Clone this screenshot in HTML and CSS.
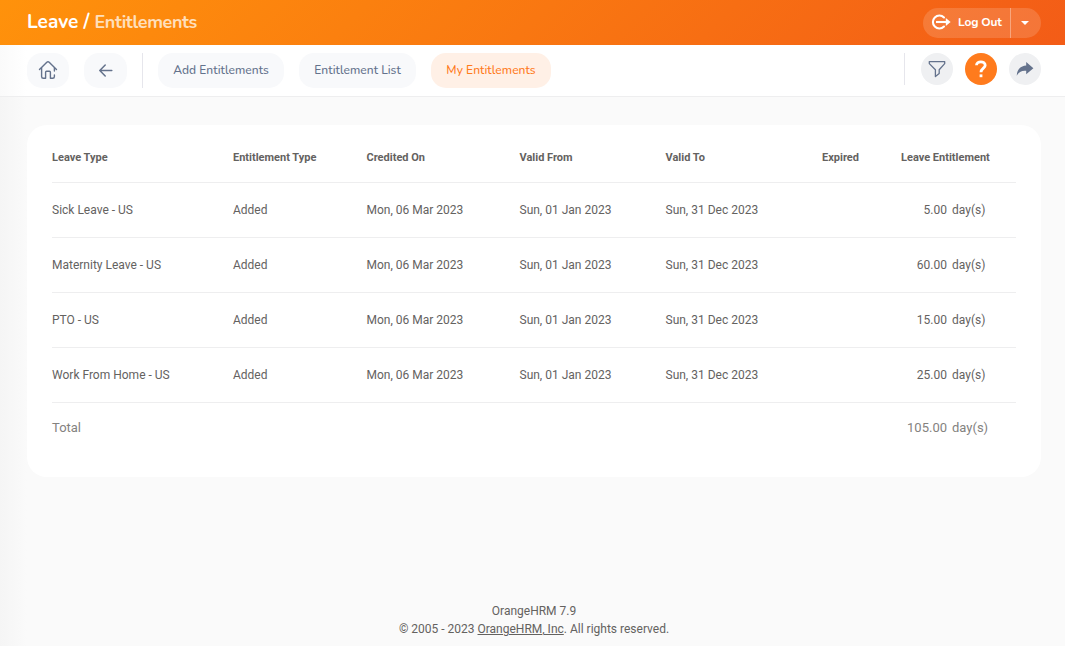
FILE: index.html
```
<!DOCTYPE html>
<html lang="en">

<head>
    <meta charset="UTF-8">
    <meta name="viewport" content="width=device-width, initial-scale=1.0">
    <title>Leave / Entitlements</title>
    <link rel="stylesheet" href="styles.css">
</head>

<body>
    <header class="topbar">
        <h1 class="title"><span class="module">Leave /</span> <span class="page">Entitlements</span></h1>
        <div class="logout">
            <button class="logout-btn">
                <svg width="20" height="16" viewBox="0 0 20 16" fill="none" stroke="#fff" stroke-width="2.1">
                    <path d="M13 3.4A6.5 6.5 0 1 0 13 12.6" stroke-linecap="round" />
                    <path d="M5 8H16" />
                    <path d="M14.8 4L19.6 8L14.8 12Z" fill="#fff" stroke="none" />
                </svg>
                <span>Log Out</span>
            </button>
            <button class="logout-more" aria-label="More">
                <svg width="8" height="4" viewBox="0 0 8 4"><path d="M0 0H8L4 4Z" fill="#fff" /></svg>
            </button>
        </div>
    </header>

    <nav class="toolbar">
        <a class="tab icon home" aria-label="Home">
            <svg width="20" height="20" viewBox="0 0 20 20" fill="none" stroke="#64728c" stroke-width="1.4" stroke-linecap="round" stroke-linejoin="round">
                <path d="M1.5 9.6L8.8 2.2Q10 1.1 11.2 2.2L18.5 9.6" />
                <path d="M3.6 8V16.5Q3.6 18.3 5.3 18.3H7.6V12.2Q7.6 11.3 8.5 11.3H11.5Q12.4 11.3 12.4 12.2V18.3H14.7Q16.4 18.3 16.4 16.5V15M16.4 8V11" />
            </svg>
        </a>
        <a class="tab icon back" aria-label="Back">
            <svg width="14" height="14" viewBox="0 0 14 14" fill="none" stroke="#64728c" stroke-width="1.5" stroke-linecap="round" stroke-linejoin="round">
                <path d="M12.8 7.5H1M6.2 2L0.8 7.5L6.2 13" />
            </svg>
        </a>
        <span class="divider"></span>
        <a class="tab add">Add Entitlements</a>
        <a class="tab list">Entitlement List</a>
        <a class="tab mine active">My Entitlements</a>

        <div class="actions">
            <button class="round" aria-label="Filter">
                <svg width="18" height="18" viewBox="0 0 18 18" fill="none" stroke="#64728c" stroke-width="1.3" stroke-linejoin="round">
                    <path d="M1.3 1.6H16.7V3.6L11.2 9.8V13.6L7.4 16.6V9.8L1.3 3.6Z" />
                </svg>
            </button>
            <button class="round help" aria-label="Help">
                <svg width="14" height="18" viewBox="0 0 14 18" fill="none" stroke="#fff" stroke-width="2.8">
                    <path d="M2.5 5.3C2.5 0.7 11.2 0.6 11.2 5.3C11.2 8.1 7 8.2 7 12.3" />
                    <path d="M7 14.4V17.2" />
                </svg>
            </button>
            <button class="round" aria-label="Share">
                <svg width="18" height="14" viewBox="0 0 18 14" fill="#64728c">
                    <path d="M10.2 0L17.4 6.2L10.2 12.2V8.8C5.6 8.5 2.8 9.8 0.7 13.7C0.9 7.7 4.5 3.7 10.2 3.4Z" />
                </svg>
            </button>
        </div>
    </nav>

    <main class="content">
        <section class="card">
            <table class="entitlements">
                <colgroup>
                    <col class="c-type">
                    <col class="c-kind">
                    <col class="c-credited">
                    <col class="c-from">
                    <col class="c-to">
                    <col class="c-expired">
                    <col class="c-days">
                </colgroup>
                <thead>
                    <tr>
                        <th>Leave Type</th>
                        <th>Entitlement Type</th>
                        <th>Credited On</th>
                        <th>Valid From</th>
                        <th>Valid To</th>
                        <th>Expired</th>
                        <th>Leave Entitlement</th>
                    </tr>
                </thead>
                <tbody>
                    <tr>
                        <td>Sick Leave - US</td>
                        <td>Added</td>
                        <td>Mon, 06 Mar 2023</td>
                        <td>Sun, 01 Jan 2023</td>
                        <td>Sun, 31 Dec 2023</td>
                        <td></td>
                        <td><span class="num">5.00</span><span class="unit">day(s)</span></td>
                    </tr>
                    <tr>
                        <td>Maternity Leave - US</td>
                        <td>Added</td>
                        <td>Mon, 06 Mar 2023</td>
                        <td>Sun, 01 Jan 2023</td>
                        <td>Sun, 31 Dec 2023</td>
                        <td></td>
                        <td><span class="num">60.00</span><span class="unit">day(s)</span></td>
                    </tr>
                    <tr>
                        <td>PTO - US</td>
                        <td>Added</td>
                        <td>Mon, 06 Mar 2023</td>
                        <td>Sun, 01 Jan 2023</td>
                        <td>Sun, 31 Dec 2023</td>
                        <td></td>
                        <td><span class="num">15.00</span><span class="unit">day(s)</span></td>
                    </tr>
                    <tr>
                        <td>Work From Home - US</td>
                        <td>Added</td>
                        <td>Mon, 06 Mar 2023</td>
                        <td>Sun, 01 Jan 2023</td>
                        <td>Sun, 31 Dec 2023</td>
                        <td></td>
                        <td><span class="num">25.00</span><span class="unit">day(s)</span></td>
                    </tr>
                </tbody>
                <tfoot>
                    <tr>
                        <td colspan="6">Total</td>
                        <td><span class="num">105.00</span><span class="unit">day(s)</span></td>
                    </tr>
                </tfoot>
            </table>
        </section>

        <footer class="footer">
            <p>OrangeHRM 7.9</p>
            <p>© 2005 - 2023 <a>OrangeHRM, Inc</a>. All rights reserved.</p>
        </footer>
    </main>
</body>

</html>
```
FILE: styles.css
```
* {
    margin: 0;
    padding: 0;
    box-sizing: border-box;
}

body {
    height: 100vh;
    display: flex;
    flex-direction: column;
    overflow: hidden;
    background-color: #fafafa;
    color: #64625f;
    font-family: Roboto, sans-serif;
    font-size: 12px;
}

button {
    border: none;
    background: none;
    color: inherit;
    cursor: pointer;
}

svg {
    display: block;
    flex: none;
}

/* top bar */
.topbar {
    height: 45px;
    padding: 0 24px 0 27px;
    display: flex;
    align-items: center;
    justify-content: space-between;
    background: linear-gradient(135deg, #ff920b, #f35c17);
    color: #fff;
    font-family: Nunito, "Open Sans", sans-serif;
}

.title {
    padding-bottom: 2px;
    display: flex;
    align-items: baseline;
    gap: 5px;
    font-size: 18px;
    line-height: 24px;
    white-space: nowrap;
}

.module {
    font-size: 19px;
    font-weight: 700;
}

.page {
    font-weight: 700;
    letter-spacing: -0.4px;
    color: #ffdfbb;
}

.logout {
    width: 118px;
    height: 30px;
    display: flex;
    border-radius: 15px;
    background-color: rgba(255, 255, 255, 0.15);
}

.logout-btn {
    width: 88px;
    padding: 0 0 1px 8px;
    display: flex;
    align-items: center;
    gap: 7px;
    border-right: 1px solid rgba(255, 255, 255, 0.35);
    font-family: inherit;
    font-size: 12px;
    font-weight: 700;
    letter-spacing: -0.2px;
    white-space: nowrap;
}

.logout-more {
    flex: 1;
    padding-right: 2px;
    display: flex;
    align-items: center;
    justify-content: center;
}

/* toolbar */
.toolbar {
    height: 52px;
    padding: 8px 24px 0 27px;
    display: flex;
    align-items: flex-start;
    border-bottom: 1px solid #eeeeef;
    background: linear-gradient(90deg, #fafafa, #fff 27px);
    font-family: Nunito, "Open Sans", sans-serif;
}

.tab {
    height: 35px;
    margin-right: 15px;
    padding-bottom: 1px;
    display: flex;
    align-items: center;
    justify-content: center;
    border-radius: 15px;
    background-color: #f8f9fb;
    color: #64728c;
    font-size: 12px;
    font-weight: 500;
    letter-spacing: 0.03px;
    white-space: nowrap;
}

.tab.active {
    background-color: #fff0e6;
    color: #ff7b1d;
}

.home {
    width: 42px;
}

.back {
    width: 43px;
}

.add {
    width: 126px;
}

.list {
    width: 117px;
}

.mine {
    width: 120px;
}

.divider {
    width: 1px;
    height: 35px;
    margin-right: 15px;
    background-color: #e6e6ec;
}

.actions {
    height: 32px;
    margin-left: auto;
    padding-left: 16px;
    display: flex;
    gap: 12px;
    border-left: 1px solid #e6e6ec;
}

.round {
    width: 32px;
    height: 32px;
    display: flex;
    align-items: center;
    justify-content: center;
    border-radius: 50%;
    background-color: #eff0f2;
}

.help {
    background-color: #ff7b1d;
}

/* content */
.content {
    flex: 1;
    padding: 28px 24px 8px 27px;
    display: flex;
    flex-direction: column;
    justify-content: space-between;
    background: linear-gradient(90deg, #f5f5f5, #fafafa 27px);
}

.card {
    height: 352px;
    padding: 7px 25px 0;
    border-radius: 20px;
    background-color: #fff;
}

.entitlements {
    width: 964px;
    table-layout: fixed;
    border-collapse: collapse;
}

.c-type { width: 181px; }
.c-kind { width: 133.5px; }
.c-credited { width: 153px; }
.c-from { width: 146px; }
.c-to { width: 115.5px; }
.c-expired { width: 120px; }
.c-days { width: 115px; }

.entitlements th {
    height: 50px;
    padding-top: 1px;
    font-size: 11px;
    font-weight: 700;
    text-align: left;
    white-space: nowrap;
}

.entitlements th:nth-child(6) {
    padding-left: 41px;
}

.entitlements td {
    height: 55px;
    white-space: nowrap;
}

.entitlements thead tr,
.entitlements tbody tr {
    border-bottom: 1px solid #eeeeef;
}

.entitlements tfoot td {
    height: 50px;
    font-size: 13px;
    color: #84827f;
}

.num {
    width: 46px;
    margin-right: 5px;
    display: inline-block;
    text-align: right;
}

.footer {
    text-align: center;
    line-height: 18px;
}

.footer a {
    text-decoration: underline;
}
```
